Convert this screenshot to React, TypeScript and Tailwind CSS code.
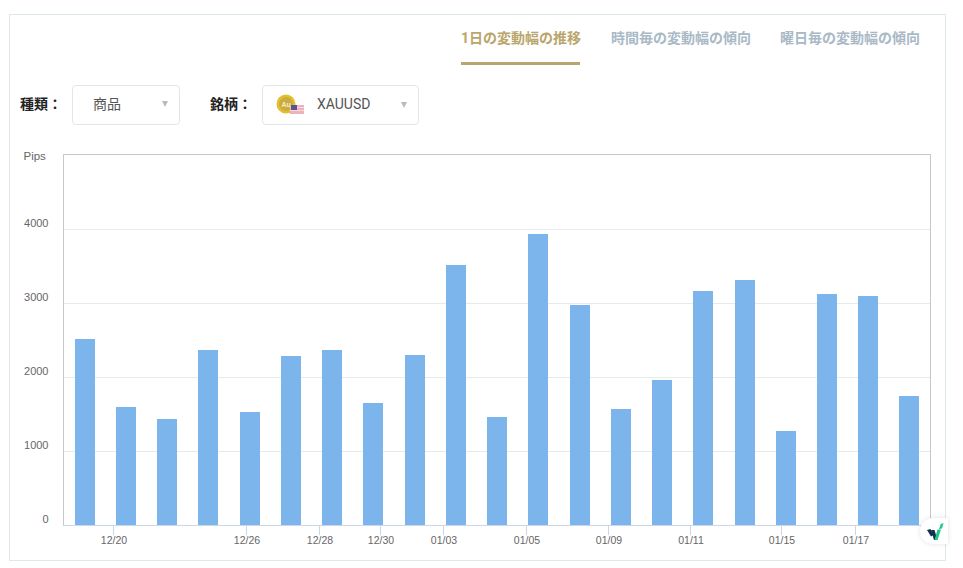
const bars: [number, number][] = [
  [75, 339], [116, 407], [157, 419], [198, 350], [240, 412], [281, 356], [322, 350],
  [363, 403], [405, 355], [446, 265], [487, 417], [528, 234], [570, 305], [611, 409],
  [652, 380], [693, 291], [735, 280], [776, 431], [817, 294], [858, 296], [899, 396],
];
const ticks: [number, string][] = [
  [114, "12/20"], [247, "12/26"], [320, "12/28"], [381, "12/30"], [444, "01/03"],
  [527, "01/05"], [609, "01/09"], [691, "01/11"], [782, "01/15"], [856, "01/17"],
];
const grid: [number, string][] = [[229.5, "4000"], [303.5, "3000"], [377.5, "2000"], [451.5, "1000"]];

function Caret() {
  return <span className="block h-0 w-0 border-x-[3.5px] border-t-[6px] border-x-transparent border-t-[#b4bcc4]" />;
}

function Coin() {
  return (
    <svg width="28" height="22" viewBox="0 0 28 22" className="block">
      <circle cx="10" cy="10" r="9.5" fill="#e6bf2c" />
      <circle cx="10" cy="10" r="7" fill="#c9ac42" />
      <text x="5.5" y="12.5" fontSize="7" fontWeight="700" fill="#f7ebbd" fontFamily="Liberation Sans, sans-serif">Au</text>
      <rect x="14" y="11" width="14" height="9" fill="#eeb2bc" />
      <rect x="14" y="13" width="14" height="1" fill="#f6d8dd" />
      <rect x="14" y="16" width="14" height="1" fill="#f6d8dd" />
      <rect x="15" y="11" width="6" height="5" fill="#56558f" />
    </svg>
  );
}

export default function App() {
  return (
    <div className="relative h-[568px] w-[963px] overflow-hidden bg-white pl-[9px] pt-[14px] font-['Roboto','Noto_Sans_CJK_JP',sans-serif]">
      <div className="h-[547px] w-[937px] border border-[#dfe8e8]">
        <div className="flex h-[50px] justify-end gap-[30px] pr-[25px]">
          <div className="mr-[1px] h-[50px] w-[119px] whitespace-nowrap border-b-[3px] border-[#b9a66c] pt-[12px] text-[14px] font-bold leading-[22px] text-[#b9a66c]">
            1日の変動幅の推移
          </div>
          <div className="mr-[-1px] pt-[12px] text-[14px] font-bold leading-[22px] text-[#a9b9c6]">時間毎の変動幅の傾向</div>
          <div className="pt-[12px] text-[14px] font-bold leading-[22px] text-[#a9b9c6]">曜日毎の変動幅の傾向</div>
        </div>
        <div className="mt-[20px] flex h-[40px] items-center pl-[10px] text-[14px] text-[#222]">
          <span className="mt-[-2px] w-[52px] font-bold">種類：</span>
          <div className="flex h-[40px] w-[108px] items-center justify-between rounded-[4px] border border-[#dfe8e8] pb-[2px] pl-[20px] pr-[11px]">
            <span className="text-[#555]">商品</span>
            <Caret />
          </div>
          <span className="ml-[30px] mt-[-2px] w-[52px] font-bold">銘柄：</span>
          <div className="flex h-[40px] w-[157px] items-center rounded-[4px] border border-[#dfe8e8] pb-[1px] pl-[13px] pr-[11px]">
            <Coin />
            <span className="ml-[13px] text-[#555]">XAUUSD</span>
            <span className="ml-auto block"><Caret /></span>
          </div>
        </div>
        <svg width="935" height="420" viewBox="10 140 935 420" className="mt-[15px] block font-['Liberation_Sans',sans-serif]">
          <rect x="63.5" y="154.5" width="867" height="371" fill="#fff" stroke="#c8c8c8" />
          {grid.map(([y, l]) => (
            <g key={l}>
              <line x1="64" x2="930" y1={y} y2={y} stroke="#e4ebeb" />
              <text x="48.5" y={y - 3} textAnchor="end" fontSize="11" fill="#666">{l}</text>
            </g>
          ))}
          <text x="48.5" y="523" textAnchor="end" fontSize="11" fill="#666">0</text>
          <text x="23.5" y="160" fontSize="11.5" fill="#666">Pips</text>
          {bars.map(([x, y]) => (
            <rect key={x} x={x} y={y} width="20" height={525 - y} fill="#7cb5ec" />
          ))}
          <line x1="63" x2="931" y1="525.5" y2="525.5" stroke="#ccd6eb" />
          {ticks.map(([x, l]) => (
            <g key={l}>
              <line x1={x - 0.5} x2={x - 0.5} y1="526" y2="535" stroke="#ccd6eb" />
              <text x={x} y="544" textAnchor="middle" fontSize="10.5" fill="#666">{l}</text>
            </g>
          ))}
        </svg>
      </div>
      <div className="absolute left-[920px] top-[518px] flex h-[26px] w-[28px] items-center rounded-l-full bg-white pl-[6px] shadow-[0_0_5px_rgba(0,0,0,0.12)]">
        <svg width="18" height="19" viewBox="0 0 18 19">
          <path d="M1 8 L4.5 7 L7.5 13 L5 14.5 Z" fill="#12314f" />
          <path d="M5 8 L8.5 8 L11.5 18 L8 18 Z" fill="#12314f" />
          <path d="M8.5 18 L11.5 18 L15 7.5 L11.5 7.5 Z" fill="#1fc98a" />
          <path d="M13 7 L16 6.5 L17.5 1 L14.8 2 Z" fill="#1fc98a" />
        </svg>
      </div>
    </div>
  );
}
